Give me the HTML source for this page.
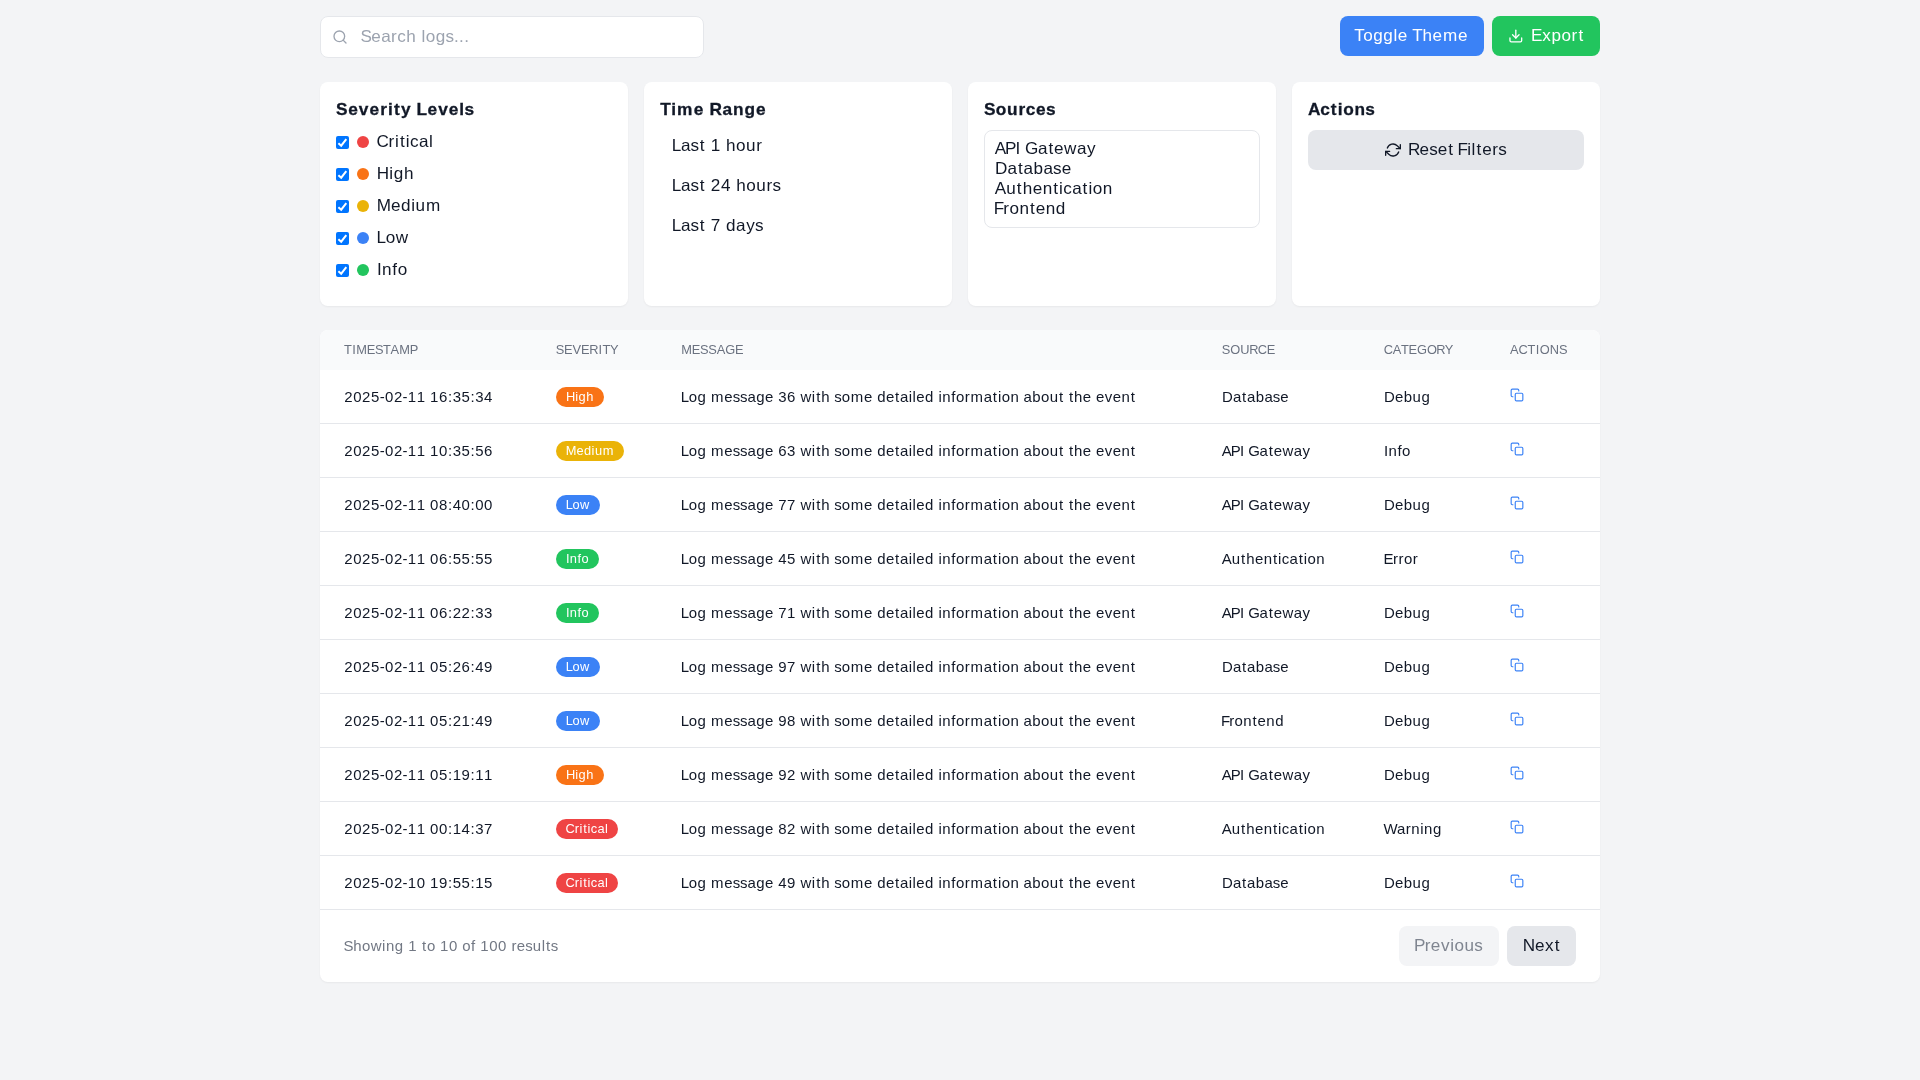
<!DOCTYPE html>
<html>
<head>
<meta charset="utf-8">
<title>Log Viewer</title>
<style>
*,*::before,*::after{box-sizing:border-box;border:0 solid #e5e7eb;margin:0;padding:0}
html,body{width:1920px;height:1080px;overflow:hidden}
.wrap{will-change:transform}
body{background:#f3f4f6;font-family:"Liberation Sans",sans-serif;font-size:16px;line-height:24px;color:#111827}
svg{display:block}
.wrap{position:relative;width:1280px;margin:0 auto;padding-top:16px}
/* top bar */
.top{display:flex;justify-content:space-between;align-items:flex-start;height:42px;margin-bottom:24px}
.search{position:relative;width:384px;height:42px;border:1px solid #e5e7eb;border-radius:8px;background:#fff}
.search svg{position:absolute;left:11px;top:12px}
.search span.ph{position:absolute;left:40px;top:8px;color:#9ca3af;white-space:nowrap}
.btns{display:flex;gap:8px}
.btn{height:40px;padding:8px 16px;border-radius:8px;color:#fff;display:flex;align-items:center;white-space:nowrap}
.blue{background:#3b82f6;width:144px}
.green{background:#22c55e;width:108px}
.green svg{margin-right:8px}
/* cards */
.grid{display:grid;grid-template-columns:repeat(4,1fr);gap:16px;margin-bottom:24px}
.card{background:#fff;border-radius:8px;padding:16px;height:224px;box-shadow:0 1px 2px 0 rgba(0,0,0,.05)}
.card h3{font-size:16px;font-weight:700;line-height:24px;margin-bottom:8px;color:#111827;white-space:nowrap;-webkit-text-stroke:0.3px}
.sev{display:flex;align-items:center;height:24px;margin-bottom:8px;color:#111827;white-space:nowrap}
.cb{width:13px;height:13px;border-radius:2px;background:#0075ff;position:relative;margin-right:8px}
.cb svg{position:absolute;left:0;top:0}
.dot{width:12px;height:12px;border-radius:50%;margin-right:8px}
.tr{display:block;padding:4px 12px;height:40px;color:#111827;white-space:nowrap}
.sel{border:1px solid #e5e7eb;border-radius:8px;padding:8px 10px;height:98px;color:#111827}
.sel div{height:20px;line-height:20px;white-space:nowrap}
.reset{width:100%;height:40px;background:#e5e7eb;border-radius:8px;display:flex;align-items:center;padding-left:77px;color:#111827;white-space:nowrap}
.reset svg{margin-right:8px}
/* table */
.tbl{background:#fff;border-radius:8px;overflow:hidden;box-shadow:0 1px 2px 0 rgba(0,0,0,.05)}
table{border-collapse:collapse;width:1280px;table-layout:fixed}
th{background:#f9fafb;height:40px;padding:0 24px;text-align:left;font-size:12px;font-weight:400;letter-spacing:.6px;color:#6b7280;line-height:16px;white-space:nowrap}
td{height:53px;padding:17px 24px 0;vertical-align:top;font-size:14px;line-height:20px;color:#111827;white-space:nowrap}
tr+tr td{border-top:1px solid #e5e7eb;height:54px;padding-top:17px}
td svg{margin-top:1px}
.badge{display:inline-block;padding:2px 10px;border-radius:9999px;font-size:12px;line-height:16px;color:#fff;vertical-align:top}
.foot{height:73px;border-top:1px solid #e5e7eb;display:flex;align-items:center;justify-content:space-between;padding:0 24px}
.foot span.sh{font-size:14px;color:#727884;white-space:nowrap}
.pg{display:flex;gap:8px}
.pg div{height:40px;padding:8px 16px;border-radius:8px;white-space:nowrap}
</style>
</head>
<body>
<div class="wrap">
  <div class="top">
    <div class="search">
      <svg width="16" height="16" viewBox="0 0 24 24" fill="none" stroke="#9ca3af" stroke-width="2" stroke-linecap="round" stroke-linejoin="round"><circle cx="11" cy="11" r="8"/><line x1="21" y1="21" x2="16.65" y2="16.65"/></svg>
      <span class="ph"><span style="font-size:17.12px;line-height:0;letter-spacing:0;margin-left:-0.63px"><span style="letter-spacing:-0.47px">S</span><span style="letter-spacing:0.30px">e</span><span style="letter-spacing:0.40px">a</span><span style="letter-spacing:0.38px">r</span><span style="letter-spacing:0.43px">c</span><span style="letter-spacing:0.47px">h</span><span style="letter-spacing:0.49px"> </span><span style="letter-spacing:0.45px">l</span><span style="letter-spacing:0.45px">o</span><span style="letter-spacing:0.21px">g</span><span style="letter-spacing:0.05px">s</span><span style="letter-spacing:0.33px">.</span><span style="letter-spacing:0.34px">.</span><span style="letter-spacing:0.17px">.</span></span></span>
    </div>
    <div class="btns">
      <div class="btn blue"><span style="font-size:17.12px;line-height:0;letter-spacing:0;margin-left:-1.71px"><span style="letter-spacing:-1.57px">T</span><span style="letter-spacing:0.45px">o</span><span style="letter-spacing:0.63px">g</span><span style="letter-spacing:0.63px">g</span><span style="letter-spacing:0.48px">l</span><span style="letter-spacing:0.33px">e</span><span style="letter-spacing:-0.18px"> </span><span style="letter-spacing:-0.04px">T</span><span style="letter-spacing:0.47px">h</span><span style="letter-spacing:0.83px">e</span><span style="letter-spacing:0.83px">m</span><span style="letter-spacing:0.16px">e</span></span></div>
      <div class="btn green"><svg width="16" height="16" viewBox="0 0 24 24" fill="none" stroke="#fff" stroke-width="2" stroke-linecap="round" stroke-linejoin="round"><path d="M21 15v4a2 2 0 0 1-2 2H5a2 2 0 0 1-2-2v-4"/><polyline points="7 10 12 15 17 10"/><line x1="12" y1="15" x2="12" y2="3"/></svg><span style="font-size:17.12px;line-height:0;letter-spacing:0;margin-left:-0.66px"><span style="letter-spacing:-0.20px">E</span><span style="letter-spacing:0.77px">x</span><span style="letter-spacing:0.45px">p</span><span style="letter-spacing:0.57px">o</span><span style="letter-spacing:1.20px">r</span><span style="letter-spacing:0.76px">t</span></span></div>
    </div>
  </div>
  <div class="grid">
    <div class="card">
      <h3><span style="font-size:17.28px;line-height:0;letter-spacing:0;margin-left:-0.01px"><span style="letter-spacing:0.62px">S</span><span style="letter-spacing:1.03px">e</span><span style="letter-spacing:1.03px">v</span><span style="letter-spacing:1.21px">e</span><span style="letter-spacing:0.93px">r</span><span style="letter-spacing:1.28px">i</span><span style="letter-spacing:1.36px">t</span><span style="letter-spacing:0.79px">y</span><span style="letter-spacing:0.20px"> </span><span style="letter-spacing:0.44px">L</span><span style="letter-spacing:1.03px">e</span><span style="letter-spacing:1.03px">v</span><span style="letter-spacing:0.96px">e</span><span style="letter-spacing:0.30px">l</span><span style="letter-spacing:-0.04px">s</span></span></h3>
      <div class="sev"><div class="cb"><svg width="13" height="13" viewBox="0 0 13 13" fill="none" stroke="#fff" stroke-width="2"><path d="M2.4 7.2L5.2 9.7L10.3 3.1"/></svg></div><div class="dot" style="background:#ef4444"></div><span style="font-size:17.12px;line-height:0;letter-spacing:0;margin-left:-0.60px"><span style="letter-spacing:-0.16px">C</span><span style="letter-spacing:0.76px">r</span><span style="letter-spacing:1.08px">i</span><span style="letter-spacing:1.08px">t</span><span style="letter-spacing:0.44px">i</span><span style="letter-spacing:0.26px">c</span><span style="letter-spacing:0.47px">a</span><span style="letter-spacing:0.32px">l</span></span></div><div class="sev"><div class="cb"><svg width="13" height="13" viewBox="0 0 13 13" fill="none" stroke="#fff" stroke-width="2"><path d="M2.4 7.2L5.2 9.7L10.3 3.1"/></svg></div><div class="dot" style="background:#f97316"></div><span style="font-size:17.12px;line-height:0;letter-spacing:0;margin-left:-0.17px"><span style="letter-spacing:0.15px">H</span><span style="letter-spacing:0.63px">i</span><span style="letter-spacing:0.63px">g</span><span style="letter-spacing:0.32px">h</span></span></div><div class="sev"><div class="cb"><svg width="13" height="13" viewBox="0 0 13 13" fill="none" stroke="#fff" stroke-width="2"><path d="M2.4 7.2L5.2 9.7L10.3 3.1"/></svg></div><div class="dot" style="background:#eab308"></div><span style="font-size:17.12px;line-height:0;letter-spacing:0;margin-left:-0.23px"><span style="letter-spacing:-0.07px">M</span><span style="letter-spacing:0.48px">e</span><span style="letter-spacing:0.64px">d</span><span style="letter-spacing:0.63px">i</span><span style="letter-spacing:0.98px">u</span><span style="letter-spacing:0.67px">m</span></span></div><div class="sev"><div class="cb"><svg width="13" height="13" viewBox="0 0 13 13" fill="none" stroke="#fff" stroke-width="2"><path d="M2.4 7.2L5.2 9.7L10.3 3.1"/></svg></div><div class="dot" style="background:#3b82f6"></div><span style="font-size:17.12px;line-height:0;letter-spacing:0;margin-left:-0.45px"><span style="letter-spacing:-0.31px">L</span><span style="letter-spacing:0.50px">o</span><span style="letter-spacing:0.36px">w</span></span></div><div class="sev"><div class="cb"><svg width="13" height="13" viewBox="0 0 13 13" fill="none" stroke="#fff" stroke-width="2"><path d="M2.4 7.2L5.2 9.7L10.3 3.1"/></svg></div><div class="dot" style="background:#22c55e"></div><span style="font-size:17.12px;line-height:0;letter-spacing:0;margin-left:-0.02px"><span style="letter-spacing:0.29px">I</span><span style="letter-spacing:0.74px">n</span><span style="letter-spacing:0.57px">f</span><span style="letter-spacing:0.14px">o</span></span></div>
    </div>
    <div class="card">
      <h3><span style="font-size:17.28px;line-height:0;letter-spacing:0;margin-left:0.18px"><span style="letter-spacing:0.52px">T</span><span style="letter-spacing:1.00px">i</span><span style="letter-spacing:1.28px">m</span><span style="letter-spacing:1.01px">e</span><span style="letter-spacing:0.31px"> </span><span style="letter-spacing:0.52px">R</span><span style="letter-spacing:1.01px">a</span><span style="letter-spacing:0.87px">n</span><span style="letter-spacing:1.07px">g</span><span style="letter-spacing:0.62px">e</span></span></h3>
      <div class="tr"><span style="font-size:17.12px;line-height:0;letter-spacing:0;margin-left:-0.31px"><span style="letter-spacing:-0.16px">L</span><span style="letter-spacing:0.03px">a</span><span style="letter-spacing:0.65px">s</span><span style="letter-spacing:0.92px">t</span><span style="letter-spacing:0.49px"> </span><span style="letter-spacing:0.49px">1</span><span style="letter-spacing:0.47px"> </span><span style="letter-spacing:0.45px">h</span><span style="letter-spacing:0.45px">o</span><span style="letter-spacing:0.75px">u</span><span style="letter-spacing:0.44px">r</span></span></div>
      <div class="tr"><span style="font-size:17.12px;line-height:0;letter-spacing:0;margin-left:-0.31px"><span style="letter-spacing:-0.16px">L</span><span style="letter-spacing:0.03px">a</span><span style="letter-spacing:0.65px">s</span><span style="letter-spacing:0.92px">t</span><span style="letter-spacing:0.49px"> </span><span style="letter-spacing:0.66px">2</span><span style="letter-spacing:0.49px">4</span><span style="letter-spacing:0.48px"> </span><span style="letter-spacing:0.44px">h</span><span style="letter-spacing:0.44px">o</span><span style="letter-spacing:0.75px">u</span><span style="letter-spacing:0.33px">r</span><span style="letter-spacing:-0.11px">s</span></span></div>
      <div class="tr"><span style="font-size:17.12px;line-height:0;letter-spacing:0;margin-left:-0.31px"><span style="letter-spacing:-0.16px">L</span><span style="letter-spacing:0.03px">a</span><span style="letter-spacing:0.65px">s</span><span style="letter-spacing:0.92px">t</span><span style="letter-spacing:0.49px"> </span><span style="letter-spacing:0.49px">7</span><span style="letter-spacing:0.48px"> </span><span style="letter-spacing:0.46px">d</span><span style="letter-spacing:0.60px">a</span><span style="letter-spacing:0.35px">y</span><span style="letter-spacing:-0.11px">s</span></span></div>
    </div>
    <div class="card">
      <h3><span style="font-size:17.28px;line-height:0;letter-spacing:0;margin-left:-0.01px"><span style="letter-spacing:0.22px">S</span><span style="letter-spacing:0.64px">o</span><span style="letter-spacing:1.00px">u</span><span style="letter-spacing:0.52px">r</span><span style="letter-spacing:0.55px">c</span><span style="letter-spacing:0.58px">e</span><span style="letter-spacing:-0.04px">s</span></span></h3>
      <div class="sel"><div><span style="font-size:17.12px;line-height:0;letter-spacing:0;margin-left:-0.24px"><span style="letter-spacing:-1.12px">A</span><span style="letter-spacing:-0.90px">P</span><span style="letter-spacing:0.14px">I</span><span style="letter-spacing:-0.29px"> </span><span style="letter-spacing:-0.32px">G</span><span style="letter-spacing:0.90px">a</span><span style="letter-spacing:0.92px">t</span><span style="letter-spacing:0.52px">e</span><span style="letter-spacing:0.50px">w</span><span style="letter-spacing:0.60px">a</span><span style="letter-spacing:0.45px">y</span></span></div><div><span style="font-size:17.12px;line-height:0;letter-spacing:0;margin-left:-0.03px"><span style="letter-spacing:0.12px">D</span><span style="letter-spacing:0.90px">a</span><span style="letter-spacing:0.90px">t</span><span style="letter-spacing:0.46px">a</span><span style="letter-spacing:0.45px">b</span><span style="letter-spacing:0.03px">a</span><span style="letter-spacing:0.05px">s</span><span style="letter-spacing:0.16px">e</span></span></div><div><span style="font-size:17.12px;line-height:0;letter-spacing:0;margin-left:-0.24px"><span style="letter-spacing:0.07px">A</span><span style="letter-spacing:1.07px">u</span><span style="letter-spacing:1.07px">t</span><span style="letter-spacing:0.47px">h</span><span style="letter-spacing:0.47px">e</span><span style="letter-spacing:1.06px">n</span><span style="letter-spacing:1.08px">t</span><span style="letter-spacing:0.44px">i</span><span style="letter-spacing:0.26px">c</span><span style="letter-spacing:0.90px">a</span><span style="letter-spacing:1.08px">t</span><span style="letter-spacing:0.45px">i</span><span style="letter-spacing:0.45px">o</span><span style="letter-spacing:0.31px">n</span></span></div><div><span style="font-size:17.12px;line-height:0;letter-spacing:0;margin-left:-1.21px"><span style="letter-spacing:-0.95px">F</span><span style="letter-spacing:0.40px">r</span><span style="letter-spacing:0.44px">o</span><span style="letter-spacing:1.07px">n</span><span style="letter-spacing:0.92px">t</span><span style="letter-spacing:0.47px">e</span><span style="letter-spacing:0.63px">n</span><span style="letter-spacing:0.32px">d</span></span></div></div>
    </div>
    <div class="card">
      <h3><span style="font-size:17.28px;line-height:0;letter-spacing:0;margin-left:-0.05px"><span style="letter-spacing:-0.12px">A</span><span style="letter-spacing:0.89px">c</span><span style="letter-spacing:1.29px">t</span><span style="letter-spacing:0.56px">i</span><span style="letter-spacing:0.63px">o</span><span style="letter-spacing:0.38px">n</span><span style="letter-spacing:-0.04px">s</span></span></h3>
      <div class="reset"><svg width="16" height="16" viewBox="0 0 24 24" fill="none" stroke="#111827" stroke-width="2" stroke-linecap="round" stroke-linejoin="round"><polyline points="23 4 23 10 17 10"/><polyline points="1 20 1 14 7 14"/><path d="M3.51 9a9 9 0 0 1 14.85-3.36L23 10M1 14l4.64 4.36A9 9 0 0 0 20.49 15"/></svg><span style="font-size:17.12px;line-height:0;letter-spacing:0;margin-left:-0.99px"><span style="letter-spacing:-0.83px">R</span><span style="letter-spacing:0.05px">e</span><span style="letter-spacing:0.05px">s</span><span style="letter-spacing:0.92px">e</span><span style="letter-spacing:0.92px">t</span><span style="letter-spacing:-1.04px"> </span><span style="letter-spacing:-0.89px">F</span><span style="letter-spacing:0.64px">i</span><span style="letter-spacing:1.08px">l</span><span style="letter-spacing:0.92px">t</span><span style="letter-spacing:0.60px">e</span><span style="letter-spacing:0.33px">r</span><span style="letter-spacing:-0.11px">s</span></span></div>
    </div>
  </div>
  <div class="tbl">
    <table>
      <colgroup><col style="width:212px"><col style="width:125px"><col style="width:541px"><col style="width:162px"><col style="width:126px"><col style="width:114px"></colgroup>
      <thead><tr><th><span style="font-size:12.84px;line-height:0;letter-spacing:0;margin-left:0.04px"><span style="letter-spacing:0.33px">T</span><span style="letter-spacing:0.42px">I</span><span style="letter-spacing:-0.06px">M</span><span style="letter-spacing:-0.37px">E</span><span style="letter-spacing:-0.60px">S</span><span style="letter-spacing:-0.30px">T</span><span style="letter-spacing:0.25px">A</span><span style="letter-spacing:-0.22px">M</span><span style="letter-spacing:-0.35px">P</span></span></th><th><span style="font-size:12.84px;line-height:0;letter-spacing:0;margin-left:-0.18px"><span style="letter-spacing:-0.37px">S</span><span style="letter-spacing:-0.06px">E</span><span style="letter-spacing:-0.07px">V</span><span style="letter-spacing:-0.36px">E</span><span style="letter-spacing:0.12px">R</span><span style="letter-spacing:0.33px">I</span><span style="letter-spacing:-0.27px">T</span><span style="letter-spacing:-0.31px">Y</span></span></th><th><span style="font-size:12.84px;line-height:0;letter-spacing:0;margin-left:0.13px"><span style="letter-spacing:-0.07px">M</span><span style="letter-spacing:-0.37px">E</span><span style="letter-spacing:-0.24px">S</span><span style="letter-spacing:-0.05px">S</span><span style="letter-spacing:-0.03px">A</span><span style="letter-spacing:-0.22px">G</span><span style="letter-spacing:-0.18px">E</span></span></th><th><span style="font-size:12.84px;line-height:0;letter-spacing:0;margin-left:-0.18px"><span style="letter-spacing:-0.15px">S</span><span style="letter-spacing:0.09px">O</span><span style="letter-spacing:-0.41px">U</span><span style="letter-spacing:-0.62px">R</span><span style="letter-spacing:-0.33px">C</span><span style="letter-spacing:-0.18px">E</span></span></th><th><span style="font-size:12.84px;line-height:0;letter-spacing:0;margin-left:-0.15px"><span style="letter-spacing:-0.50px">C</span><span style="letter-spacing:-0.30px">A</span><span style="letter-spacing:-0.15px">T</span><span style="letter-spacing:-0.24px">E</span><span style="letter-spacing:-0.01px">G</span><span style="letter-spacing:-0.52px">O</span><span style="letter-spacing:-0.86px">R</span><span style="letter-spacing:-0.31px">Y</span></span></th><th><span style="font-size:12.84px;line-height:0;letter-spacing:0;margin-left:0.01px"><span style="letter-spacing:-0.14px">A</span><span style="letter-spacing:-0.11px">C</span><span style="letter-spacing:0.33px">T</span><span style="letter-spacing:0.32px">I</span><span style="letter-spacing:0.18px">O</span><span style="letter-spacing:-0.01px">N</span><span style="letter-spacing:-0.17px">S</span></span></th></tr></thead>
      <tbody>
<tr><td><span style="font-size:14.98px;line-height:0;letter-spacing:0;margin-left:0.29px"><span style="letter-spacing:0.57px">2</span><span style="letter-spacing:0.57px">0</span><span style="letter-spacing:0.57px">2</span><span style="letter-spacing:0.32px">5</span><span style="letter-spacing:0.32px">-</span><span style="letter-spacing:0.57px">0</span><span style="letter-spacing:0.32px">2</span><span style="letter-spacing:0.32px">-</span><span style="letter-spacing:0.57px">1</span><span style="letter-spacing:0.43px">1</span><span style="letter-spacing:0.43px"> </span><span style="letter-spacing:0.58px">1</span><span style="letter-spacing:0.56px">6</span><span style="letter-spacing:0.57px">:</span><span style="letter-spacing:0.58px">3</span><span style="letter-spacing:0.56px">5</span><span style="letter-spacing:0.57px">:</span><span style="letter-spacing:0.59px">3</span><span style="letter-spacing:0.30px">4</span></span></td><td><span class="badge" style="background:#f97316"><span style="font-size:12.84px;line-height:0;letter-spacing:0;margin-left:-0.13px"><span style="letter-spacing:0.11px">H</span><span style="letter-spacing:0.48px">i</span><span style="letter-spacing:0.48px">g</span><span style="letter-spacing:0.24px">h</span></span></span></td><td><span style="font-size:14.98px;line-height:0;letter-spacing:0;margin-left:-0.39px"><span style="letter-spacing:-0.28px">L</span><span style="letter-spacing:0.40px">o</span><span style="letter-spacing:0.43px">g</span><span style="letter-spacing:0.73px"> </span><span style="letter-spacing:0.72px">m</span><span style="letter-spacing:0.04px">e</span><span style="letter-spacing:-0.20px">s</span><span style="letter-spacing:0.02px">s</span><span style="letter-spacing:0.40px">a</span><span style="letter-spacing:0.42px">g</span><span style="letter-spacing:0.28px">e</span><span style="letter-spacing:0.43px"> </span><span style="letter-spacing:0.57px">3</span><span style="letter-spacing:0.43px">6</span><span style="letter-spacing:0.46px"> </span><span style="letter-spacing:0.60px">w</span><span style="letter-spacing:0.94px">i</span><span style="letter-spacing:0.93px">t</span><span style="letter-spacing:0.42px">h</span><span style="letter-spacing:0.05px"> </span><span style="letter-spacing:0.02px">s</span><span style="letter-spacing:0.70px">o</span><span style="letter-spacing:0.72px">m</span><span style="letter-spacing:0.28px">e</span><span style="letter-spacing:0.43px"> </span><span style="letter-spacing:0.42px">d</span><span style="letter-spacing:0.80px">e</span><span style="letter-spacing:0.78px">t</span><span style="letter-spacing:0.40px">a</span><span style="letter-spacing:0.56px">i</span><span style="letter-spacing:0.42px">l</span><span style="letter-spacing:0.42px">e</span><span style="letter-spacing:0.43px">d</span><span style="letter-spacing:0.43px"> </span><span style="letter-spacing:0.55px">i</span><span style="letter-spacing:0.65px">n</span><span style="letter-spacing:0.50px">f</span><span style="letter-spacing:0.38px">o</span><span style="letter-spacing:0.84px">r</span><span style="letter-spacing:0.70px">m</span><span style="letter-spacing:0.78px">a</span><span style="letter-spacing:0.94px">t</span><span style="letter-spacing:0.40px">i</span><span style="letter-spacing:0.39px">o</span><span style="letter-spacing:0.42px">n</span><span style="letter-spacing:0.27px"> </span><span style="letter-spacing:0.40px">a</span><span style="letter-spacing:0.40px">b</span><span style="letter-spacing:0.39px">o</span><span style="letter-spacing:0.93px">u</span><span style="letter-spacing:0.81px">t</span><span style="letter-spacing:0.81px"> </span><span style="letter-spacing:0.93px">t</span><span style="letter-spacing:0.41px">h</span><span style="letter-spacing:0.28px">e</span><span style="letter-spacing:0.28px"> </span><span style="letter-spacing:0.54px">e</span><span style="letter-spacing:0.54px">v</span><span style="letter-spacing:0.41px">e</span><span style="letter-spacing:0.94px">n</span><span style="letter-spacing:0.67px">t</span></span></td><td><span style="font-size:14.98px;line-height:0;letter-spacing:0;margin-left:-0.03px"><span style="letter-spacing:0.10px">D</span><span style="letter-spacing:0.79px">a</span><span style="letter-spacing:0.78px">t</span><span style="letter-spacing:0.40px">a</span><span style="letter-spacing:0.40px">b</span><span style="letter-spacing:0.03px">a</span><span style="letter-spacing:0.05px">s</span><span style="letter-spacing:0.15px">e</span></span></td><td><span style="font-size:14.98px;line-height:0;letter-spacing:0;margin-left:-0.03px"><span style="letter-spacing:0.12px">D</span><span style="letter-spacing:0.42px">e</span><span style="letter-spacing:0.54px">b</span><span style="letter-spacing:0.56px">u</span><span style="letter-spacing:0.29px">g</span></span></td><td><svg width="14" height="14" viewBox="0 0 24 24" fill="none" stroke="#3b82f6" stroke-width="2" stroke-linecap="round" stroke-linejoin="round"><rect x="9" y="9" width="13" height="13" rx="2" ry="2"/><path d="M5 15H4a2 2 0 0 1-2-2V4a2 2 0 0 1 2-2h9a2 2 0 0 1 2 2v1"/></svg></td></tr>
<tr><td><span style="font-size:14.98px;line-height:0;letter-spacing:0;margin-left:0.29px"><span style="letter-spacing:0.57px">2</span><span style="letter-spacing:0.57px">0</span><span style="letter-spacing:0.57px">2</span><span style="letter-spacing:0.32px">5</span><span style="letter-spacing:0.32px">-</span><span style="letter-spacing:0.57px">0</span><span style="letter-spacing:0.32px">2</span><span style="letter-spacing:0.32px">-</span><span style="letter-spacing:0.57px">1</span><span style="letter-spacing:0.43px">1</span><span style="letter-spacing:0.43px"> </span><span style="letter-spacing:0.58px">1</span><span style="letter-spacing:0.56px">0</span><span style="letter-spacing:0.57px">:</span><span style="letter-spacing:0.58px">3</span><span style="letter-spacing:0.56px">5</span><span style="letter-spacing:0.57px">:</span><span style="letter-spacing:0.59px">5</span><span style="letter-spacing:0.30px">6</span></span></td><td><span class="badge" style="background:#eab308"><span style="font-size:12.84px;line-height:0;letter-spacing:0;margin-left:-0.18px"><span style="letter-spacing:-0.05px">M</span><span style="letter-spacing:0.36px">e</span><span style="letter-spacing:0.48px">d</span><span style="letter-spacing:0.47px">i</span><span style="letter-spacing:0.73px">u</span><span style="letter-spacing:0.50px">m</span></span></span></td><td><span style="font-size:14.98px;line-height:0;letter-spacing:0;margin-left:-0.39px"><span style="letter-spacing:-0.28px">L</span><span style="letter-spacing:0.40px">o</span><span style="letter-spacing:0.43px">g</span><span style="letter-spacing:0.73px"> </span><span style="letter-spacing:0.72px">m</span><span style="letter-spacing:0.04px">e</span><span style="letter-spacing:-0.20px">s</span><span style="letter-spacing:0.02px">s</span><span style="letter-spacing:0.40px">a</span><span style="letter-spacing:0.42px">g</span><span style="letter-spacing:0.28px">e</span><span style="letter-spacing:0.43px"> </span><span style="letter-spacing:0.57px">6</span><span style="letter-spacing:0.43px">3</span><span style="letter-spacing:0.46px"> </span><span style="letter-spacing:0.60px">w</span><span style="letter-spacing:0.94px">i</span><span style="letter-spacing:0.93px">t</span><span style="letter-spacing:0.42px">h</span><span style="letter-spacing:0.05px"> </span><span style="letter-spacing:0.02px">s</span><span style="letter-spacing:0.70px">o</span><span style="letter-spacing:0.72px">m</span><span style="letter-spacing:0.28px">e</span><span style="letter-spacing:0.43px"> </span><span style="letter-spacing:0.42px">d</span><span style="letter-spacing:0.80px">e</span><span style="letter-spacing:0.78px">t</span><span style="letter-spacing:0.40px">a</span><span style="letter-spacing:0.56px">i</span><span style="letter-spacing:0.42px">l</span><span style="letter-spacing:0.42px">e</span><span style="letter-spacing:0.43px">d</span><span style="letter-spacing:0.43px"> </span><span style="letter-spacing:0.55px">i</span><span style="letter-spacing:0.65px">n</span><span style="letter-spacing:0.50px">f</span><span style="letter-spacing:0.38px">o</span><span style="letter-spacing:0.84px">r</span><span style="letter-spacing:0.70px">m</span><span style="letter-spacing:0.78px">a</span><span style="letter-spacing:0.94px">t</span><span style="letter-spacing:0.40px">i</span><span style="letter-spacing:0.39px">o</span><span style="letter-spacing:0.42px">n</span><span style="letter-spacing:0.27px"> </span><span style="letter-spacing:0.40px">a</span><span style="letter-spacing:0.40px">b</span><span style="letter-spacing:0.39px">o</span><span style="letter-spacing:0.93px">u</span><span style="letter-spacing:0.81px">t</span><span style="letter-spacing:0.81px"> </span><span style="letter-spacing:0.93px">t</span><span style="letter-spacing:0.41px">h</span><span style="letter-spacing:0.28px">e</span><span style="letter-spacing:0.28px"> </span><span style="letter-spacing:0.54px">e</span><span style="letter-spacing:0.54px">v</span><span style="letter-spacing:0.41px">e</span><span style="letter-spacing:0.94px">n</span><span style="letter-spacing:0.67px">t</span></span></td><td><span style="font-size:14.98px;line-height:0;letter-spacing:0;margin-left:-0.21px"><span style="letter-spacing:-0.98px">A</span><span style="letter-spacing:-0.79px">P</span><span style="letter-spacing:0.13px">I</span><span style="letter-spacing:-0.26px"> </span><span style="letter-spacing:-0.28px">G</span><span style="letter-spacing:0.79px">a</span><span style="letter-spacing:0.81px">t</span><span style="letter-spacing:0.46px">e</span><span style="letter-spacing:0.44px">w</span><span style="letter-spacing:0.53px">a</span><span style="letter-spacing:0.40px">y</span></span></td><td><span style="font-size:14.98px;line-height:0;letter-spacing:0;margin-left:-0.02px"><span style="letter-spacing:0.25px">I</span><span style="letter-spacing:0.65px">n</span><span style="letter-spacing:0.50px">f</span><span style="letter-spacing:0.12px">o</span></span></td><td><svg width="14" height="14" viewBox="0 0 24 24" fill="none" stroke="#3b82f6" stroke-width="2" stroke-linecap="round" stroke-linejoin="round"><rect x="9" y="9" width="13" height="13" rx="2" ry="2"/><path d="M5 15H4a2 2 0 0 1-2-2V4a2 2 0 0 1 2-2h9a2 2 0 0 1 2 2v1"/></svg></td></tr>
<tr><td><span style="font-size:14.98px;line-height:0;letter-spacing:0;margin-left:0.29px"><span style="letter-spacing:0.57px">2</span><span style="letter-spacing:0.57px">0</span><span style="letter-spacing:0.57px">2</span><span style="letter-spacing:0.32px">5</span><span style="letter-spacing:0.32px">-</span><span style="letter-spacing:0.57px">0</span><span style="letter-spacing:0.32px">2</span><span style="letter-spacing:0.32px">-</span><span style="letter-spacing:0.57px">1</span><span style="letter-spacing:0.43px">1</span><span style="letter-spacing:0.43px"> </span><span style="letter-spacing:0.58px">0</span><span style="letter-spacing:0.56px">8</span><span style="letter-spacing:0.57px">:</span><span style="letter-spacing:0.58px">4</span><span style="letter-spacing:0.56px">0</span><span style="letter-spacing:0.57px">:</span><span style="letter-spacing:0.59px">0</span><span style="letter-spacing:0.30px">0</span></span></td><td><span class="badge" style="background:#3b82f6"><span style="font-size:12.84px;line-height:0;letter-spacing:0;margin-left:-0.34px"><span style="letter-spacing:-0.23px">L</span><span style="letter-spacing:0.38px">o</span><span style="letter-spacing:0.28px">w</span></span></span></td><td><span style="font-size:14.98px;line-height:0;letter-spacing:0;margin-left:-0.39px"><span style="letter-spacing:-0.28px">L</span><span style="letter-spacing:0.40px">o</span><span style="letter-spacing:0.43px">g</span><span style="letter-spacing:0.73px"> </span><span style="letter-spacing:0.72px">m</span><span style="letter-spacing:0.04px">e</span><span style="letter-spacing:-0.20px">s</span><span style="letter-spacing:0.02px">s</span><span style="letter-spacing:0.40px">a</span><span style="letter-spacing:0.42px">g</span><span style="letter-spacing:0.28px">e</span><span style="letter-spacing:0.43px"> </span><span style="letter-spacing:0.57px">7</span><span style="letter-spacing:0.43px">7</span><span style="letter-spacing:0.46px"> </span><span style="letter-spacing:0.60px">w</span><span style="letter-spacing:0.94px">i</span><span style="letter-spacing:0.93px">t</span><span style="letter-spacing:0.42px">h</span><span style="letter-spacing:0.05px"> </span><span style="letter-spacing:0.02px">s</span><span style="letter-spacing:0.70px">o</span><span style="letter-spacing:0.72px">m</span><span style="letter-spacing:0.28px">e</span><span style="letter-spacing:0.43px"> </span><span style="letter-spacing:0.42px">d</span><span style="letter-spacing:0.80px">e</span><span style="letter-spacing:0.78px">t</span><span style="letter-spacing:0.40px">a</span><span style="letter-spacing:0.56px">i</span><span style="letter-spacing:0.42px">l</span><span style="letter-spacing:0.42px">e</span><span style="letter-spacing:0.43px">d</span><span style="letter-spacing:0.43px"> </span><span style="letter-spacing:0.55px">i</span><span style="letter-spacing:0.65px">n</span><span style="letter-spacing:0.50px">f</span><span style="letter-spacing:0.38px">o</span><span style="letter-spacing:0.84px">r</span><span style="letter-spacing:0.70px">m</span><span style="letter-spacing:0.78px">a</span><span style="letter-spacing:0.94px">t</span><span style="letter-spacing:0.40px">i</span><span style="letter-spacing:0.39px">o</span><span style="letter-spacing:0.42px">n</span><span style="letter-spacing:0.27px"> </span><span style="letter-spacing:0.40px">a</span><span style="letter-spacing:0.40px">b</span><span style="letter-spacing:0.39px">o</span><span style="letter-spacing:0.93px">u</span><span style="letter-spacing:0.81px">t</span><span style="letter-spacing:0.81px"> </span><span style="letter-spacing:0.93px">t</span><span style="letter-spacing:0.41px">h</span><span style="letter-spacing:0.28px">e</span><span style="letter-spacing:0.28px"> </span><span style="letter-spacing:0.54px">e</span><span style="letter-spacing:0.54px">v</span><span style="letter-spacing:0.41px">e</span><span style="letter-spacing:0.94px">n</span><span style="letter-spacing:0.67px">t</span></span></td><td><span style="font-size:14.98px;line-height:0;letter-spacing:0;margin-left:-0.21px"><span style="letter-spacing:-0.98px">A</span><span style="letter-spacing:-0.79px">P</span><span style="letter-spacing:0.13px">I</span><span style="letter-spacing:-0.26px"> </span><span style="letter-spacing:-0.28px">G</span><span style="letter-spacing:0.79px">a</span><span style="letter-spacing:0.81px">t</span><span style="letter-spacing:0.46px">e</span><span style="letter-spacing:0.44px">w</span><span style="letter-spacing:0.53px">a</span><span style="letter-spacing:0.40px">y</span></span></td><td><span style="font-size:14.98px;line-height:0;letter-spacing:0;margin-left:-0.03px"><span style="letter-spacing:0.12px">D</span><span style="letter-spacing:0.42px">e</span><span style="letter-spacing:0.54px">b</span><span style="letter-spacing:0.56px">u</span><span style="letter-spacing:0.29px">g</span></span></td><td><svg width="14" height="14" viewBox="0 0 24 24" fill="none" stroke="#3b82f6" stroke-width="2" stroke-linecap="round" stroke-linejoin="round"><rect x="9" y="9" width="13" height="13" rx="2" ry="2"/><path d="M5 15H4a2 2 0 0 1-2-2V4a2 2 0 0 1 2-2h9a2 2 0 0 1 2 2v1"/></svg></td></tr>
<tr><td><span style="font-size:14.98px;line-height:0;letter-spacing:0;margin-left:0.29px"><span style="letter-spacing:0.57px">2</span><span style="letter-spacing:0.57px">0</span><span style="letter-spacing:0.57px">2</span><span style="letter-spacing:0.32px">5</span><span style="letter-spacing:0.32px">-</span><span style="letter-spacing:0.57px">0</span><span style="letter-spacing:0.32px">2</span><span style="letter-spacing:0.32px">-</span><span style="letter-spacing:0.57px">1</span><span style="letter-spacing:0.43px">1</span><span style="letter-spacing:0.43px"> </span><span style="letter-spacing:0.58px">0</span><span style="letter-spacing:0.56px">6</span><span style="letter-spacing:0.57px">:</span><span style="letter-spacing:0.58px">5</span><span style="letter-spacing:0.56px">5</span><span style="letter-spacing:0.57px">:</span><span style="letter-spacing:0.59px">5</span><span style="letter-spacing:0.30px">5</span></span></td><td><span class="badge" style="background:#22c55e"><span style="font-size:12.84px;line-height:0;letter-spacing:0;margin-left:-0.02px"><span style="letter-spacing:0.22px">I</span><span style="letter-spacing:0.56px">n</span><span style="letter-spacing:0.43px">f</span><span style="letter-spacing:0.11px">o</span></span></span></td><td><span style="font-size:14.98px;line-height:0;letter-spacing:0;margin-left:-0.39px"><span style="letter-spacing:-0.28px">L</span><span style="letter-spacing:0.40px">o</span><span style="letter-spacing:0.43px">g</span><span style="letter-spacing:0.73px"> </span><span style="letter-spacing:0.72px">m</span><span style="letter-spacing:0.04px">e</span><span style="letter-spacing:-0.20px">s</span><span style="letter-spacing:0.02px">s</span><span style="letter-spacing:0.40px">a</span><span style="letter-spacing:0.42px">g</span><span style="letter-spacing:0.28px">e</span><span style="letter-spacing:0.43px"> </span><span style="letter-spacing:0.57px">4</span><span style="letter-spacing:0.43px">5</span><span style="letter-spacing:0.46px"> </span><span style="letter-spacing:0.60px">w</span><span style="letter-spacing:0.94px">i</span><span style="letter-spacing:0.93px">t</span><span style="letter-spacing:0.42px">h</span><span style="letter-spacing:0.05px"> </span><span style="letter-spacing:0.02px">s</span><span style="letter-spacing:0.70px">o</span><span style="letter-spacing:0.72px">m</span><span style="letter-spacing:0.28px">e</span><span style="letter-spacing:0.43px"> </span><span style="letter-spacing:0.42px">d</span><span style="letter-spacing:0.80px">e</span><span style="letter-spacing:0.78px">t</span><span style="letter-spacing:0.40px">a</span><span style="letter-spacing:0.56px">i</span><span style="letter-spacing:0.42px">l</span><span style="letter-spacing:0.42px">e</span><span style="letter-spacing:0.43px">d</span><span style="letter-spacing:0.43px"> </span><span style="letter-spacing:0.55px">i</span><span style="letter-spacing:0.65px">n</span><span style="letter-spacing:0.50px">f</span><span style="letter-spacing:0.38px">o</span><span style="letter-spacing:0.84px">r</span><span style="letter-spacing:0.70px">m</span><span style="letter-spacing:0.78px">a</span><span style="letter-spacing:0.94px">t</span><span style="letter-spacing:0.40px">i</span><span style="letter-spacing:0.39px">o</span><span style="letter-spacing:0.42px">n</span><span style="letter-spacing:0.27px"> </span><span style="letter-spacing:0.40px">a</span><span style="letter-spacing:0.40px">b</span><span style="letter-spacing:0.39px">o</span><span style="letter-spacing:0.93px">u</span><span style="letter-spacing:0.81px">t</span><span style="letter-spacing:0.81px"> </span><span style="letter-spacing:0.93px">t</span><span style="letter-spacing:0.41px">h</span><span style="letter-spacing:0.28px">e</span><span style="letter-spacing:0.28px"> </span><span style="letter-spacing:0.54px">e</span><span style="letter-spacing:0.54px">v</span><span style="letter-spacing:0.41px">e</span><span style="letter-spacing:0.94px">n</span><span style="letter-spacing:0.67px">t</span></span></td><td><span style="font-size:14.98px;line-height:0;letter-spacing:0;margin-left:-0.21px"><span style="letter-spacing:0.06px">A</span><span style="letter-spacing:0.94px">u</span><span style="letter-spacing:0.94px">t</span><span style="letter-spacing:0.41px">h</span><span style="letter-spacing:0.41px">e</span><span style="letter-spacing:0.93px">n</span><span style="letter-spacing:0.94px">t</span><span style="letter-spacing:0.39px">i</span><span style="letter-spacing:0.23px">c</span><span style="letter-spacing:0.78px">a</span><span style="letter-spacing:0.94px">t</span><span style="letter-spacing:0.40px">i</span><span style="letter-spacing:0.40px">o</span><span style="letter-spacing:0.28px">n</span></span></td><td><span style="font-size:14.98px;line-height:0;letter-spacing:0;margin-left:-0.57px"><span style="letter-spacing:-0.32px">E</span><span style="letter-spacing:0.49px">r</span><span style="letter-spacing:0.35px">r</span><span style="letter-spacing:0.50px">o</span><span style="letter-spacing:0.39px">r</span></span></td><td><svg width="14" height="14" viewBox="0 0 24 24" fill="none" stroke="#3b82f6" stroke-width="2" stroke-linecap="round" stroke-linejoin="round"><rect x="9" y="9" width="13" height="13" rx="2" ry="2"/><path d="M5 15H4a2 2 0 0 1-2-2V4a2 2 0 0 1 2-2h9a2 2 0 0 1 2 2v1"/></svg></td></tr>
<tr><td><span style="font-size:14.98px;line-height:0;letter-spacing:0;margin-left:0.29px"><span style="letter-spacing:0.57px">2</span><span style="letter-spacing:0.57px">0</span><span style="letter-spacing:0.57px">2</span><span style="letter-spacing:0.32px">5</span><span style="letter-spacing:0.32px">-</span><span style="letter-spacing:0.57px">0</span><span style="letter-spacing:0.32px">2</span><span style="letter-spacing:0.32px">-</span><span style="letter-spacing:0.57px">1</span><span style="letter-spacing:0.43px">1</span><span style="letter-spacing:0.43px"> </span><span style="letter-spacing:0.58px">0</span><span style="letter-spacing:0.56px">6</span><span style="letter-spacing:0.57px">:</span><span style="letter-spacing:0.58px">2</span><span style="letter-spacing:0.56px">2</span><span style="letter-spacing:0.57px">:</span><span style="letter-spacing:0.59px">3</span><span style="letter-spacing:0.30px">3</span></span></td><td><span class="badge" style="background:#22c55e"><span style="font-size:12.84px;line-height:0;letter-spacing:0;margin-left:-0.02px"><span style="letter-spacing:0.22px">I</span><span style="letter-spacing:0.56px">n</span><span style="letter-spacing:0.43px">f</span><span style="letter-spacing:0.11px">o</span></span></span></td><td><span style="font-size:14.98px;line-height:0;letter-spacing:0;margin-left:-0.39px"><span style="letter-spacing:-0.28px">L</span><span style="letter-spacing:0.40px">o</span><span style="letter-spacing:0.43px">g</span><span style="letter-spacing:0.73px"> </span><span style="letter-spacing:0.72px">m</span><span style="letter-spacing:0.04px">e</span><span style="letter-spacing:-0.20px">s</span><span style="letter-spacing:0.02px">s</span><span style="letter-spacing:0.40px">a</span><span style="letter-spacing:0.42px">g</span><span style="letter-spacing:0.28px">e</span><span style="letter-spacing:0.43px"> </span><span style="letter-spacing:0.57px">7</span><span style="letter-spacing:0.43px">1</span><span style="letter-spacing:0.46px"> </span><span style="letter-spacing:0.60px">w</span><span style="letter-spacing:0.94px">i</span><span style="letter-spacing:0.93px">t</span><span style="letter-spacing:0.42px">h</span><span style="letter-spacing:0.05px"> </span><span style="letter-spacing:0.02px">s</span><span style="letter-spacing:0.70px">o</span><span style="letter-spacing:0.72px">m</span><span style="letter-spacing:0.28px">e</span><span style="letter-spacing:0.43px"> </span><span style="letter-spacing:0.42px">d</span><span style="letter-spacing:0.80px">e</span><span style="letter-spacing:0.78px">t</span><span style="letter-spacing:0.40px">a</span><span style="letter-spacing:0.56px">i</span><span style="letter-spacing:0.42px">l</span><span style="letter-spacing:0.42px">e</span><span style="letter-spacing:0.43px">d</span><span style="letter-spacing:0.43px"> </span><span style="letter-spacing:0.55px">i</span><span style="letter-spacing:0.65px">n</span><span style="letter-spacing:0.50px">f</span><span style="letter-spacing:0.38px">o</span><span style="letter-spacing:0.84px">r</span><span style="letter-spacing:0.70px">m</span><span style="letter-spacing:0.78px">a</span><span style="letter-spacing:0.94px">t</span><span style="letter-spacing:0.40px">i</span><span style="letter-spacing:0.39px">o</span><span style="letter-spacing:0.42px">n</span><span style="letter-spacing:0.27px"> </span><span style="letter-spacing:0.40px">a</span><span style="letter-spacing:0.40px">b</span><span style="letter-spacing:0.39px">o</span><span style="letter-spacing:0.93px">u</span><span style="letter-spacing:0.81px">t</span><span style="letter-spacing:0.81px"> </span><span style="letter-spacing:0.93px">t</span><span style="letter-spacing:0.41px">h</span><span style="letter-spacing:0.28px">e</span><span style="letter-spacing:0.28px"> </span><span style="letter-spacing:0.54px">e</span><span style="letter-spacing:0.54px">v</span><span style="letter-spacing:0.41px">e</span><span style="letter-spacing:0.94px">n</span><span style="letter-spacing:0.67px">t</span></span></td><td><span style="font-size:14.98px;line-height:0;letter-spacing:0;margin-left:-0.21px"><span style="letter-spacing:-0.98px">A</span><span style="letter-spacing:-0.79px">P</span><span style="letter-spacing:0.13px">I</span><span style="letter-spacing:-0.26px"> </span><span style="letter-spacing:-0.28px">G</span><span style="letter-spacing:0.79px">a</span><span style="letter-spacing:0.81px">t</span><span style="letter-spacing:0.46px">e</span><span style="letter-spacing:0.44px">w</span><span style="letter-spacing:0.53px">a</span><span style="letter-spacing:0.40px">y</span></span></td><td><span style="font-size:14.98px;line-height:0;letter-spacing:0;margin-left:-0.03px"><span style="letter-spacing:0.12px">D</span><span style="letter-spacing:0.42px">e</span><span style="letter-spacing:0.54px">b</span><span style="letter-spacing:0.56px">u</span><span style="letter-spacing:0.29px">g</span></span></td><td><svg width="14" height="14" viewBox="0 0 24 24" fill="none" stroke="#3b82f6" stroke-width="2" stroke-linecap="round" stroke-linejoin="round"><rect x="9" y="9" width="13" height="13" rx="2" ry="2"/><path d="M5 15H4a2 2 0 0 1-2-2V4a2 2 0 0 1 2-2h9a2 2 0 0 1 2 2v1"/></svg></td></tr>
<tr><td><span style="font-size:14.98px;line-height:0;letter-spacing:0;margin-left:0.29px"><span style="letter-spacing:0.57px">2</span><span style="letter-spacing:0.57px">0</span><span style="letter-spacing:0.57px">2</span><span style="letter-spacing:0.32px">5</span><span style="letter-spacing:0.32px">-</span><span style="letter-spacing:0.57px">0</span><span style="letter-spacing:0.32px">2</span><span style="letter-spacing:0.32px">-</span><span style="letter-spacing:0.57px">1</span><span style="letter-spacing:0.43px">1</span><span style="letter-spacing:0.43px"> </span><span style="letter-spacing:0.58px">0</span><span style="letter-spacing:0.56px">5</span><span style="letter-spacing:0.57px">:</span><span style="letter-spacing:0.58px">2</span><span style="letter-spacing:0.56px">6</span><span style="letter-spacing:0.57px">:</span><span style="letter-spacing:0.59px">4</span><span style="letter-spacing:0.30px">9</span></span></td><td><span class="badge" style="background:#3b82f6"><span style="font-size:12.84px;line-height:0;letter-spacing:0;margin-left:-0.34px"><span style="letter-spacing:-0.23px">L</span><span style="letter-spacing:0.38px">o</span><span style="letter-spacing:0.28px">w</span></span></span></td><td><span style="font-size:14.98px;line-height:0;letter-spacing:0;margin-left:-0.39px"><span style="letter-spacing:-0.28px">L</span><span style="letter-spacing:0.40px">o</span><span style="letter-spacing:0.43px">g</span><span style="letter-spacing:0.73px"> </span><span style="letter-spacing:0.72px">m</span><span style="letter-spacing:0.04px">e</span><span style="letter-spacing:-0.20px">s</span><span style="letter-spacing:0.02px">s</span><span style="letter-spacing:0.40px">a</span><span style="letter-spacing:0.42px">g</span><span style="letter-spacing:0.28px">e</span><span style="letter-spacing:0.43px"> </span><span style="letter-spacing:0.57px">9</span><span style="letter-spacing:0.43px">7</span><span style="letter-spacing:0.46px"> </span><span style="letter-spacing:0.60px">w</span><span style="letter-spacing:0.94px">i</span><span style="letter-spacing:0.93px">t</span><span style="letter-spacing:0.42px">h</span><span style="letter-spacing:0.05px"> </span><span style="letter-spacing:0.02px">s</span><span style="letter-spacing:0.70px">o</span><span style="letter-spacing:0.72px">m</span><span style="letter-spacing:0.28px">e</span><span style="letter-spacing:0.43px"> </span><span style="letter-spacing:0.42px">d</span><span style="letter-spacing:0.80px">e</span><span style="letter-spacing:0.78px">t</span><span style="letter-spacing:0.40px">a</span><span style="letter-spacing:0.56px">i</span><span style="letter-spacing:0.42px">l</span><span style="letter-spacing:0.42px">e</span><span style="letter-spacing:0.43px">d</span><span style="letter-spacing:0.43px"> </span><span style="letter-spacing:0.55px">i</span><span style="letter-spacing:0.65px">n</span><span style="letter-spacing:0.50px">f</span><span style="letter-spacing:0.38px">o</span><span style="letter-spacing:0.84px">r</span><span style="letter-spacing:0.70px">m</span><span style="letter-spacing:0.78px">a</span><span style="letter-spacing:0.94px">t</span><span style="letter-spacing:0.40px">i</span><span style="letter-spacing:0.39px">o</span><span style="letter-spacing:0.42px">n</span><span style="letter-spacing:0.27px"> </span><span style="letter-spacing:0.40px">a</span><span style="letter-spacing:0.40px">b</span><span style="letter-spacing:0.39px">o</span><span style="letter-spacing:0.93px">u</span><span style="letter-spacing:0.81px">t</span><span style="letter-spacing:0.81px"> </span><span style="letter-spacing:0.93px">t</span><span style="letter-spacing:0.41px">h</span><span style="letter-spacing:0.28px">e</span><span style="letter-spacing:0.28px"> </span><span style="letter-spacing:0.54px">e</span><span style="letter-spacing:0.54px">v</span><span style="letter-spacing:0.41px">e</span><span style="letter-spacing:0.94px">n</span><span style="letter-spacing:0.67px">t</span></span></td><td><span style="font-size:14.98px;line-height:0;letter-spacing:0;margin-left:-0.03px"><span style="letter-spacing:0.10px">D</span><span style="letter-spacing:0.79px">a</span><span style="letter-spacing:0.78px">t</span><span style="letter-spacing:0.40px">a</span><span style="letter-spacing:0.40px">b</span><span style="letter-spacing:0.03px">a</span><span style="letter-spacing:0.05px">s</span><span style="letter-spacing:0.15px">e</span></span></td><td><span style="font-size:14.98px;line-height:0;letter-spacing:0;margin-left:-0.03px"><span style="letter-spacing:0.12px">D</span><span style="letter-spacing:0.42px">e</span><span style="letter-spacing:0.54px">b</span><span style="letter-spacing:0.56px">u</span><span style="letter-spacing:0.29px">g</span></span></td><td><svg width="14" height="14" viewBox="0 0 24 24" fill="none" stroke="#3b82f6" stroke-width="2" stroke-linecap="round" stroke-linejoin="round"><rect x="9" y="9" width="13" height="13" rx="2" ry="2"/><path d="M5 15H4a2 2 0 0 1-2-2V4a2 2 0 0 1 2-2h9a2 2 0 0 1 2 2v1"/></svg></td></tr>
<tr><td><span style="font-size:14.98px;line-height:0;letter-spacing:0;margin-left:0.29px"><span style="letter-spacing:0.57px">2</span><span style="letter-spacing:0.57px">0</span><span style="letter-spacing:0.57px">2</span><span style="letter-spacing:0.32px">5</span><span style="letter-spacing:0.32px">-</span><span style="letter-spacing:0.57px">0</span><span style="letter-spacing:0.32px">2</span><span style="letter-spacing:0.32px">-</span><span style="letter-spacing:0.57px">1</span><span style="letter-spacing:0.43px">1</span><span style="letter-spacing:0.43px"> </span><span style="letter-spacing:0.58px">0</span><span style="letter-spacing:0.56px">5</span><span style="letter-spacing:0.57px">:</span><span style="letter-spacing:0.58px">2</span><span style="letter-spacing:0.56px">1</span><span style="letter-spacing:0.57px">:</span><span style="letter-spacing:0.59px">4</span><span style="letter-spacing:0.30px">9</span></span></td><td><span class="badge" style="background:#3b82f6"><span style="font-size:12.84px;line-height:0;letter-spacing:0;margin-left:-0.34px"><span style="letter-spacing:-0.23px">L</span><span style="letter-spacing:0.38px">o</span><span style="letter-spacing:0.28px">w</span></span></span></td><td><span style="font-size:14.98px;line-height:0;letter-spacing:0;margin-left:-0.39px"><span style="letter-spacing:-0.28px">L</span><span style="letter-spacing:0.40px">o</span><span style="letter-spacing:0.43px">g</span><span style="letter-spacing:0.73px"> </span><span style="letter-spacing:0.72px">m</span><span style="letter-spacing:0.04px">e</span><span style="letter-spacing:-0.20px">s</span><span style="letter-spacing:0.02px">s</span><span style="letter-spacing:0.40px">a</span><span style="letter-spacing:0.42px">g</span><span style="letter-spacing:0.28px">e</span><span style="letter-spacing:0.43px"> </span><span style="letter-spacing:0.57px">9</span><span style="letter-spacing:0.43px">8</span><span style="letter-spacing:0.46px"> </span><span style="letter-spacing:0.60px">w</span><span style="letter-spacing:0.94px">i</span><span style="letter-spacing:0.93px">t</span><span style="letter-spacing:0.42px">h</span><span style="letter-spacing:0.05px"> </span><span style="letter-spacing:0.02px">s</span><span style="letter-spacing:0.70px">o</span><span style="letter-spacing:0.72px">m</span><span style="letter-spacing:0.28px">e</span><span style="letter-spacing:0.43px"> </span><span style="letter-spacing:0.42px">d</span><span style="letter-spacing:0.80px">e</span><span style="letter-spacing:0.78px">t</span><span style="letter-spacing:0.40px">a</span><span style="letter-spacing:0.56px">i</span><span style="letter-spacing:0.42px">l</span><span style="letter-spacing:0.42px">e</span><span style="letter-spacing:0.43px">d</span><span style="letter-spacing:0.43px"> </span><span style="letter-spacing:0.55px">i</span><span style="letter-spacing:0.65px">n</span><span style="letter-spacing:0.50px">f</span><span style="letter-spacing:0.38px">o</span><span style="letter-spacing:0.84px">r</span><span style="letter-spacing:0.70px">m</span><span style="letter-spacing:0.78px">a</span><span style="letter-spacing:0.94px">t</span><span style="letter-spacing:0.40px">i</span><span style="letter-spacing:0.39px">o</span><span style="letter-spacing:0.42px">n</span><span style="letter-spacing:0.27px"> </span><span style="letter-spacing:0.40px">a</span><span style="letter-spacing:0.40px">b</span><span style="letter-spacing:0.39px">o</span><span style="letter-spacing:0.93px">u</span><span style="letter-spacing:0.81px">t</span><span style="letter-spacing:0.81px"> </span><span style="letter-spacing:0.93px">t</span><span style="letter-spacing:0.41px">h</span><span style="letter-spacing:0.28px">e</span><span style="letter-spacing:0.28px"> </span><span style="letter-spacing:0.54px">e</span><span style="letter-spacing:0.54px">v</span><span style="letter-spacing:0.41px">e</span><span style="letter-spacing:0.94px">n</span><span style="letter-spacing:0.67px">t</span></span></td><td><span style="font-size:14.98px;line-height:0;letter-spacing:0;margin-left:-1.06px"><span style="letter-spacing:-0.84px">F</span><span style="letter-spacing:0.35px">r</span><span style="letter-spacing:0.39px">o</span><span style="letter-spacing:0.93px">n</span><span style="letter-spacing:0.81px">t</span><span style="letter-spacing:0.41px">e</span><span style="letter-spacing:0.56px">n</span><span style="letter-spacing:0.29px">d</span></span></td><td><span style="font-size:14.98px;line-height:0;letter-spacing:0;margin-left:-0.03px"><span style="letter-spacing:0.12px">D</span><span style="letter-spacing:0.42px">e</span><span style="letter-spacing:0.54px">b</span><span style="letter-spacing:0.56px">u</span><span style="letter-spacing:0.29px">g</span></span></td><td><svg width="14" height="14" viewBox="0 0 24 24" fill="none" stroke="#3b82f6" stroke-width="2" stroke-linecap="round" stroke-linejoin="round"><rect x="9" y="9" width="13" height="13" rx="2" ry="2"/><path d="M5 15H4a2 2 0 0 1-2-2V4a2 2 0 0 1 2-2h9a2 2 0 0 1 2 2v1"/></svg></td></tr>
<tr><td><span style="font-size:14.98px;line-height:0;letter-spacing:0;margin-left:0.29px"><span style="letter-spacing:0.57px">2</span><span style="letter-spacing:0.57px">0</span><span style="letter-spacing:0.57px">2</span><span style="letter-spacing:0.32px">5</span><span style="letter-spacing:0.32px">-</span><span style="letter-spacing:0.57px">0</span><span style="letter-spacing:0.32px">2</span><span style="letter-spacing:0.32px">-</span><span style="letter-spacing:0.57px">1</span><span style="letter-spacing:0.43px">1</span><span style="letter-spacing:0.43px"> </span><span style="letter-spacing:0.58px">0</span><span style="letter-spacing:0.56px">5</span><span style="letter-spacing:0.57px">:</span><span style="letter-spacing:0.58px">1</span><span style="letter-spacing:0.56px">9</span><span style="letter-spacing:0.57px">:</span><span style="letter-spacing:0.59px">1</span><span style="letter-spacing:0.30px">1</span></span></td><td><span class="badge" style="background:#f97316"><span style="font-size:12.84px;line-height:0;letter-spacing:0;margin-left:-0.13px"><span style="letter-spacing:0.11px">H</span><span style="letter-spacing:0.48px">i</span><span style="letter-spacing:0.48px">g</span><span style="letter-spacing:0.24px">h</span></span></span></td><td><span style="font-size:14.98px;line-height:0;letter-spacing:0;margin-left:-0.39px"><span style="letter-spacing:-0.28px">L</span><span style="letter-spacing:0.40px">o</span><span style="letter-spacing:0.43px">g</span><span style="letter-spacing:0.73px"> </span><span style="letter-spacing:0.72px">m</span><span style="letter-spacing:0.04px">e</span><span style="letter-spacing:-0.20px">s</span><span style="letter-spacing:0.02px">s</span><span style="letter-spacing:0.40px">a</span><span style="letter-spacing:0.42px">g</span><span style="letter-spacing:0.28px">e</span><span style="letter-spacing:0.43px"> </span><span style="letter-spacing:0.57px">9</span><span style="letter-spacing:0.43px">2</span><span style="letter-spacing:0.46px"> </span><span style="letter-spacing:0.60px">w</span><span style="letter-spacing:0.94px">i</span><span style="letter-spacing:0.93px">t</span><span style="letter-spacing:0.42px">h</span><span style="letter-spacing:0.05px"> </span><span style="letter-spacing:0.02px">s</span><span style="letter-spacing:0.70px">o</span><span style="letter-spacing:0.72px">m</span><span style="letter-spacing:0.28px">e</span><span style="letter-spacing:0.43px"> </span><span style="letter-spacing:0.42px">d</span><span style="letter-spacing:0.80px">e</span><span style="letter-spacing:0.78px">t</span><span style="letter-spacing:0.40px">a</span><span style="letter-spacing:0.56px">i</span><span style="letter-spacing:0.42px">l</span><span style="letter-spacing:0.42px">e</span><span style="letter-spacing:0.43px">d</span><span style="letter-spacing:0.43px"> </span><span style="letter-spacing:0.55px">i</span><span style="letter-spacing:0.65px">n</span><span style="letter-spacing:0.50px">f</span><span style="letter-spacing:0.38px">o</span><span style="letter-spacing:0.84px">r</span><span style="letter-spacing:0.70px">m</span><span style="letter-spacing:0.78px">a</span><span style="letter-spacing:0.94px">t</span><span style="letter-spacing:0.40px">i</span><span style="letter-spacing:0.39px">o</span><span style="letter-spacing:0.42px">n</span><span style="letter-spacing:0.27px"> </span><span style="letter-spacing:0.40px">a</span><span style="letter-spacing:0.40px">b</span><span style="letter-spacing:0.39px">o</span><span style="letter-spacing:0.93px">u</span><span style="letter-spacing:0.81px">t</span><span style="letter-spacing:0.81px"> </span><span style="letter-spacing:0.93px">t</span><span style="letter-spacing:0.41px">h</span><span style="letter-spacing:0.28px">e</span><span style="letter-spacing:0.28px"> </span><span style="letter-spacing:0.54px">e</span><span style="letter-spacing:0.54px">v</span><span style="letter-spacing:0.41px">e</span><span style="letter-spacing:0.94px">n</span><span style="letter-spacing:0.67px">t</span></span></td><td><span style="font-size:14.98px;line-height:0;letter-spacing:0;margin-left:-0.21px"><span style="letter-spacing:-0.98px">A</span><span style="letter-spacing:-0.79px">P</span><span style="letter-spacing:0.13px">I</span><span style="letter-spacing:-0.26px"> </span><span style="letter-spacing:-0.28px">G</span><span style="letter-spacing:0.79px">a</span><span style="letter-spacing:0.81px">t</span><span style="letter-spacing:0.46px">e</span><span style="letter-spacing:0.44px">w</span><span style="letter-spacing:0.53px">a</span><span style="letter-spacing:0.40px">y</span></span></td><td><span style="font-size:14.98px;line-height:0;letter-spacing:0;margin-left:-0.03px"><span style="letter-spacing:0.12px">D</span><span style="letter-spacing:0.42px">e</span><span style="letter-spacing:0.54px">b</span><span style="letter-spacing:0.56px">u</span><span style="letter-spacing:0.29px">g</span></span></td><td><svg width="14" height="14" viewBox="0 0 24 24" fill="none" stroke="#3b82f6" stroke-width="2" stroke-linecap="round" stroke-linejoin="round"><rect x="9" y="9" width="13" height="13" rx="2" ry="2"/><path d="M5 15H4a2 2 0 0 1-2-2V4a2 2 0 0 1 2-2h9a2 2 0 0 1 2 2v1"/></svg></td></tr>
<tr><td><span style="font-size:14.98px;line-height:0;letter-spacing:0;margin-left:0.29px"><span style="letter-spacing:0.57px">2</span><span style="letter-spacing:0.57px">0</span><span style="letter-spacing:0.57px">2</span><span style="letter-spacing:0.32px">5</span><span style="letter-spacing:0.32px">-</span><span style="letter-spacing:0.57px">0</span><span style="letter-spacing:0.32px">2</span><span style="letter-spacing:0.32px">-</span><span style="letter-spacing:0.57px">1</span><span style="letter-spacing:0.43px">1</span><span style="letter-spacing:0.43px"> </span><span style="letter-spacing:0.58px">0</span><span style="letter-spacing:0.56px">0</span><span style="letter-spacing:0.57px">:</span><span style="letter-spacing:0.58px">1</span><span style="letter-spacing:0.56px">4</span><span style="letter-spacing:0.57px">:</span><span style="letter-spacing:0.59px">3</span><span style="letter-spacing:0.30px">7</span></span></td><td><span class="badge" style="background:#ef4444"><span style="font-size:12.84px;line-height:0;letter-spacing:0;margin-left:-0.45px"><span style="letter-spacing:-0.12px">C</span><span style="letter-spacing:0.57px">r</span><span style="letter-spacing:0.81px">i</span><span style="letter-spacing:0.81px">t</span><span style="letter-spacing:0.33px">i</span><span style="letter-spacing:0.20px">c</span><span style="letter-spacing:0.35px">a</span><span style="letter-spacing:0.25px">l</span></span></span></td><td><span style="font-size:14.98px;line-height:0;letter-spacing:0;margin-left:-0.39px"><span style="letter-spacing:-0.28px">L</span><span style="letter-spacing:0.40px">o</span><span style="letter-spacing:0.43px">g</span><span style="letter-spacing:0.73px"> </span><span style="letter-spacing:0.72px">m</span><span style="letter-spacing:0.04px">e</span><span style="letter-spacing:-0.20px">s</span><span style="letter-spacing:0.02px">s</span><span style="letter-spacing:0.40px">a</span><span style="letter-spacing:0.42px">g</span><span style="letter-spacing:0.28px">e</span><span style="letter-spacing:0.43px"> </span><span style="letter-spacing:0.57px">8</span><span style="letter-spacing:0.43px">2</span><span style="letter-spacing:0.46px"> </span><span style="letter-spacing:0.60px">w</span><span style="letter-spacing:0.94px">i</span><span style="letter-spacing:0.93px">t</span><span style="letter-spacing:0.42px">h</span><span style="letter-spacing:0.05px"> </span><span style="letter-spacing:0.02px">s</span><span style="letter-spacing:0.70px">o</span><span style="letter-spacing:0.72px">m</span><span style="letter-spacing:0.28px">e</span><span style="letter-spacing:0.43px"> </span><span style="letter-spacing:0.42px">d</span><span style="letter-spacing:0.80px">e</span><span style="letter-spacing:0.78px">t</span><span style="letter-spacing:0.40px">a</span><span style="letter-spacing:0.56px">i</span><span style="letter-spacing:0.42px">l</span><span style="letter-spacing:0.42px">e</span><span style="letter-spacing:0.43px">d</span><span style="letter-spacing:0.43px"> </span><span style="letter-spacing:0.55px">i</span><span style="letter-spacing:0.65px">n</span><span style="letter-spacing:0.50px">f</span><span style="letter-spacing:0.38px">o</span><span style="letter-spacing:0.84px">r</span><span style="letter-spacing:0.70px">m</span><span style="letter-spacing:0.78px">a</span><span style="letter-spacing:0.94px">t</span><span style="letter-spacing:0.40px">i</span><span style="letter-spacing:0.39px">o</span><span style="letter-spacing:0.42px">n</span><span style="letter-spacing:0.27px"> </span><span style="letter-spacing:0.40px">a</span><span style="letter-spacing:0.40px">b</span><span style="letter-spacing:0.39px">o</span><span style="letter-spacing:0.93px">u</span><span style="letter-spacing:0.81px">t</span><span style="letter-spacing:0.81px"> </span><span style="letter-spacing:0.93px">t</span><span style="letter-spacing:0.41px">h</span><span style="letter-spacing:0.28px">e</span><span style="letter-spacing:0.28px"> </span><span style="letter-spacing:0.54px">e</span><span style="letter-spacing:0.54px">v</span><span style="letter-spacing:0.41px">e</span><span style="letter-spacing:0.94px">n</span><span style="letter-spacing:0.67px">t</span></span></td><td><span style="font-size:14.98px;line-height:0;letter-spacing:0;margin-left:-0.21px"><span style="letter-spacing:0.06px">A</span><span style="letter-spacing:0.94px">u</span><span style="letter-spacing:0.94px">t</span><span style="letter-spacing:0.41px">h</span><span style="letter-spacing:0.41px">e</span><span style="letter-spacing:0.93px">n</span><span style="letter-spacing:0.94px">t</span><span style="letter-spacing:0.39px">i</span><span style="letter-spacing:0.23px">c</span><span style="letter-spacing:0.78px">a</span><span style="letter-spacing:0.94px">t</span><span style="letter-spacing:0.40px">i</span><span style="letter-spacing:0.40px">o</span><span style="letter-spacing:0.28px">n</span></span></td><td><span style="font-size:14.98px;line-height:0;letter-spacing:0;margin-left:-0.60px"><span style="letter-spacing:-0.48px">W</span><span style="letter-spacing:0.39px">a</span><span style="letter-spacing:0.54px">r</span><span style="letter-spacing:0.55px">n</span><span style="letter-spacing:0.55px">i</span><span style="letter-spacing:0.55px">n</span><span style="letter-spacing:0.28px">g</span></span></td><td><svg width="14" height="14" viewBox="0 0 24 24" fill="none" stroke="#3b82f6" stroke-width="2" stroke-linecap="round" stroke-linejoin="round"><rect x="9" y="9" width="13" height="13" rx="2" ry="2"/><path d="M5 15H4a2 2 0 0 1-2-2V4a2 2 0 0 1 2-2h9a2 2 0 0 1 2 2v1"/></svg></td></tr>
<tr><td><span style="font-size:14.98px;line-height:0;letter-spacing:0;margin-left:0.29px"><span style="letter-spacing:0.57px">2</span><span style="letter-spacing:0.57px">0</span><span style="letter-spacing:0.57px">2</span><span style="letter-spacing:0.32px">5</span><span style="letter-spacing:0.32px">-</span><span style="letter-spacing:0.57px">0</span><span style="letter-spacing:0.32px">2</span><span style="letter-spacing:0.32px">-</span><span style="letter-spacing:0.57px">1</span><span style="letter-spacing:0.43px">0</span><span style="letter-spacing:0.43px"> </span><span style="letter-spacing:0.58px">1</span><span style="letter-spacing:0.56px">9</span><span style="letter-spacing:0.57px">:</span><span style="letter-spacing:0.58px">5</span><span style="letter-spacing:0.56px">5</span><span style="letter-spacing:0.57px">:</span><span style="letter-spacing:0.59px">1</span><span style="letter-spacing:0.30px">5</span></span></td><td><span class="badge" style="background:#ef4444"><span style="font-size:12.84px;line-height:0;letter-spacing:0;margin-left:-0.45px"><span style="letter-spacing:-0.12px">C</span><span style="letter-spacing:0.57px">r</span><span style="letter-spacing:0.81px">i</span><span style="letter-spacing:0.81px">t</span><span style="letter-spacing:0.33px">i</span><span style="letter-spacing:0.20px">c</span><span style="letter-spacing:0.35px">a</span><span style="letter-spacing:0.25px">l</span></span></span></td><td><span style="font-size:14.98px;line-height:0;letter-spacing:0;margin-left:-0.39px"><span style="letter-spacing:-0.28px">L</span><span style="letter-spacing:0.40px">o</span><span style="letter-spacing:0.43px">g</span><span style="letter-spacing:0.73px"> </span><span style="letter-spacing:0.72px">m</span><span style="letter-spacing:0.04px">e</span><span style="letter-spacing:-0.20px">s</span><span style="letter-spacing:0.02px">s</span><span style="letter-spacing:0.40px">a</span><span style="letter-spacing:0.42px">g</span><span style="letter-spacing:0.28px">e</span><span style="letter-spacing:0.43px"> </span><span style="letter-spacing:0.57px">4</span><span style="letter-spacing:0.43px">9</span><span style="letter-spacing:0.46px"> </span><span style="letter-spacing:0.60px">w</span><span style="letter-spacing:0.94px">i</span><span style="letter-spacing:0.93px">t</span><span style="letter-spacing:0.42px">h</span><span style="letter-spacing:0.05px"> </span><span style="letter-spacing:0.02px">s</span><span style="letter-spacing:0.70px">o</span><span style="letter-spacing:0.72px">m</span><span style="letter-spacing:0.28px">e</span><span style="letter-spacing:0.43px"> </span><span style="letter-spacing:0.42px">d</span><span style="letter-spacing:0.80px">e</span><span style="letter-spacing:0.78px">t</span><span style="letter-spacing:0.40px">a</span><span style="letter-spacing:0.56px">i</span><span style="letter-spacing:0.42px">l</span><span style="letter-spacing:0.42px">e</span><span style="letter-spacing:0.43px">d</span><span style="letter-spacing:0.43px"> </span><span style="letter-spacing:0.55px">i</span><span style="letter-spacing:0.65px">n</span><span style="letter-spacing:0.50px">f</span><span style="letter-spacing:0.38px">o</span><span style="letter-spacing:0.84px">r</span><span style="letter-spacing:0.70px">m</span><span style="letter-spacing:0.78px">a</span><span style="letter-spacing:0.94px">t</span><span style="letter-spacing:0.40px">i</span><span style="letter-spacing:0.39px">o</span><span style="letter-spacing:0.42px">n</span><span style="letter-spacing:0.27px"> </span><span style="letter-spacing:0.40px">a</span><span style="letter-spacing:0.40px">b</span><span style="letter-spacing:0.39px">o</span><span style="letter-spacing:0.93px">u</span><span style="letter-spacing:0.81px">t</span><span style="letter-spacing:0.81px"> </span><span style="letter-spacing:0.93px">t</span><span style="letter-spacing:0.41px">h</span><span style="letter-spacing:0.28px">e</span><span style="letter-spacing:0.28px"> </span><span style="letter-spacing:0.54px">e</span><span style="letter-spacing:0.54px">v</span><span style="letter-spacing:0.41px">e</span><span style="letter-spacing:0.94px">n</span><span style="letter-spacing:0.67px">t</span></span></td><td><span style="font-size:14.98px;line-height:0;letter-spacing:0;margin-left:-0.03px"><span style="letter-spacing:0.10px">D</span><span style="letter-spacing:0.79px">a</span><span style="letter-spacing:0.78px">t</span><span style="letter-spacing:0.40px">a</span><span style="letter-spacing:0.40px">b</span><span style="letter-spacing:0.03px">a</span><span style="letter-spacing:0.05px">s</span><span style="letter-spacing:0.15px">e</span></span></td><td><span style="font-size:14.98px;line-height:0;letter-spacing:0;margin-left:-0.03px"><span style="letter-spacing:0.12px">D</span><span style="letter-spacing:0.42px">e</span><span style="letter-spacing:0.54px">b</span><span style="letter-spacing:0.56px">u</span><span style="letter-spacing:0.29px">g</span></span></td><td><svg width="14" height="14" viewBox="0 0 24 24" fill="none" stroke="#3b82f6" stroke-width="2" stroke-linecap="round" stroke-linejoin="round"><rect x="9" y="9" width="13" height="13" rx="2" ry="2"/><path d="M5 15H4a2 2 0 0 1-2-2V4a2 2 0 0 1 2-2h9a2 2 0 0 1 2 2v1"/></svg></td></tr>
      </tbody>
    </table>
    <div class="foot"><span class="sh"><span style="font-size:14.98px;line-height:0;letter-spacing:0;margin-left:-0.56px"><span style="letter-spacing:-0.29px">S</span><span style="letter-spacing:0.39px">h</span><span style="letter-spacing:0.43px">o</span><span style="letter-spacing:0.60px">w</span><span style="letter-spacing:0.55px">i</span><span style="letter-spacing:0.55px">n</span><span style="letter-spacing:0.43px">g</span><span style="letter-spacing:0.43px"> </span><span style="letter-spacing:0.43px">1</span><span style="letter-spacing:0.81px"> </span><span style="letter-spacing:0.78px">t</span><span style="letter-spacing:0.26px">o</span><span style="letter-spacing:0.43px"> </span><span style="letter-spacing:0.57px">1</span><span style="letter-spacing:0.43px">0</span><span style="letter-spacing:0.26px"> </span><span style="letter-spacing:0.50px">o</span><span style="letter-spacing:0.53px">f</span><span style="letter-spacing:0.43px"> </span><span style="letter-spacing:0.57px">1</span><span style="letter-spacing:0.57px">0</span><span style="letter-spacing:0.43px">0</span><span style="letter-spacing:0.38px"> </span><span style="letter-spacing:0.37px">r</span><span style="letter-spacing:0.04px">e</span><span style="letter-spacing:0.18px">s</span><span style="letter-spacing:0.55px">u</span><span style="letter-spacing:0.94px">l</span><span style="letter-spacing:0.57px">t</span><span style="letter-spacing:-0.09px">s</span></span></span><div class="pg"><div style="background:#f3f4f6;color:#7f8590;width:100px"><span style="font-size:17.12px;line-height:0;letter-spacing:0;margin-left:-1.03px"><span style="letter-spacing:-0.76px">P</span><span style="letter-spacing:0.43px">r</span><span style="letter-spacing:0.62px">e</span><span style="letter-spacing:0.77px">v</span><span style="letter-spacing:0.45px">i</span><span style="letter-spacing:0.45px">o</span><span style="letter-spacing:0.20px">u</span><span style="letter-spacing:-0.11px">s</span></span></div><div style="background:#e5e7eb;color:#111827;width:69px"><span style="font-size:17.12px;line-height:0;letter-spacing:0;margin-left:-0.20px"><span style="letter-spacing:-0.18px">N</span><span style="letter-spacing:0.47px">e</span><span style="letter-spacing:1.22px">x</span><span style="letter-spacing:0.76px">t</span></span></div></div></div>
  </div>
</div>
</body>
</html>
